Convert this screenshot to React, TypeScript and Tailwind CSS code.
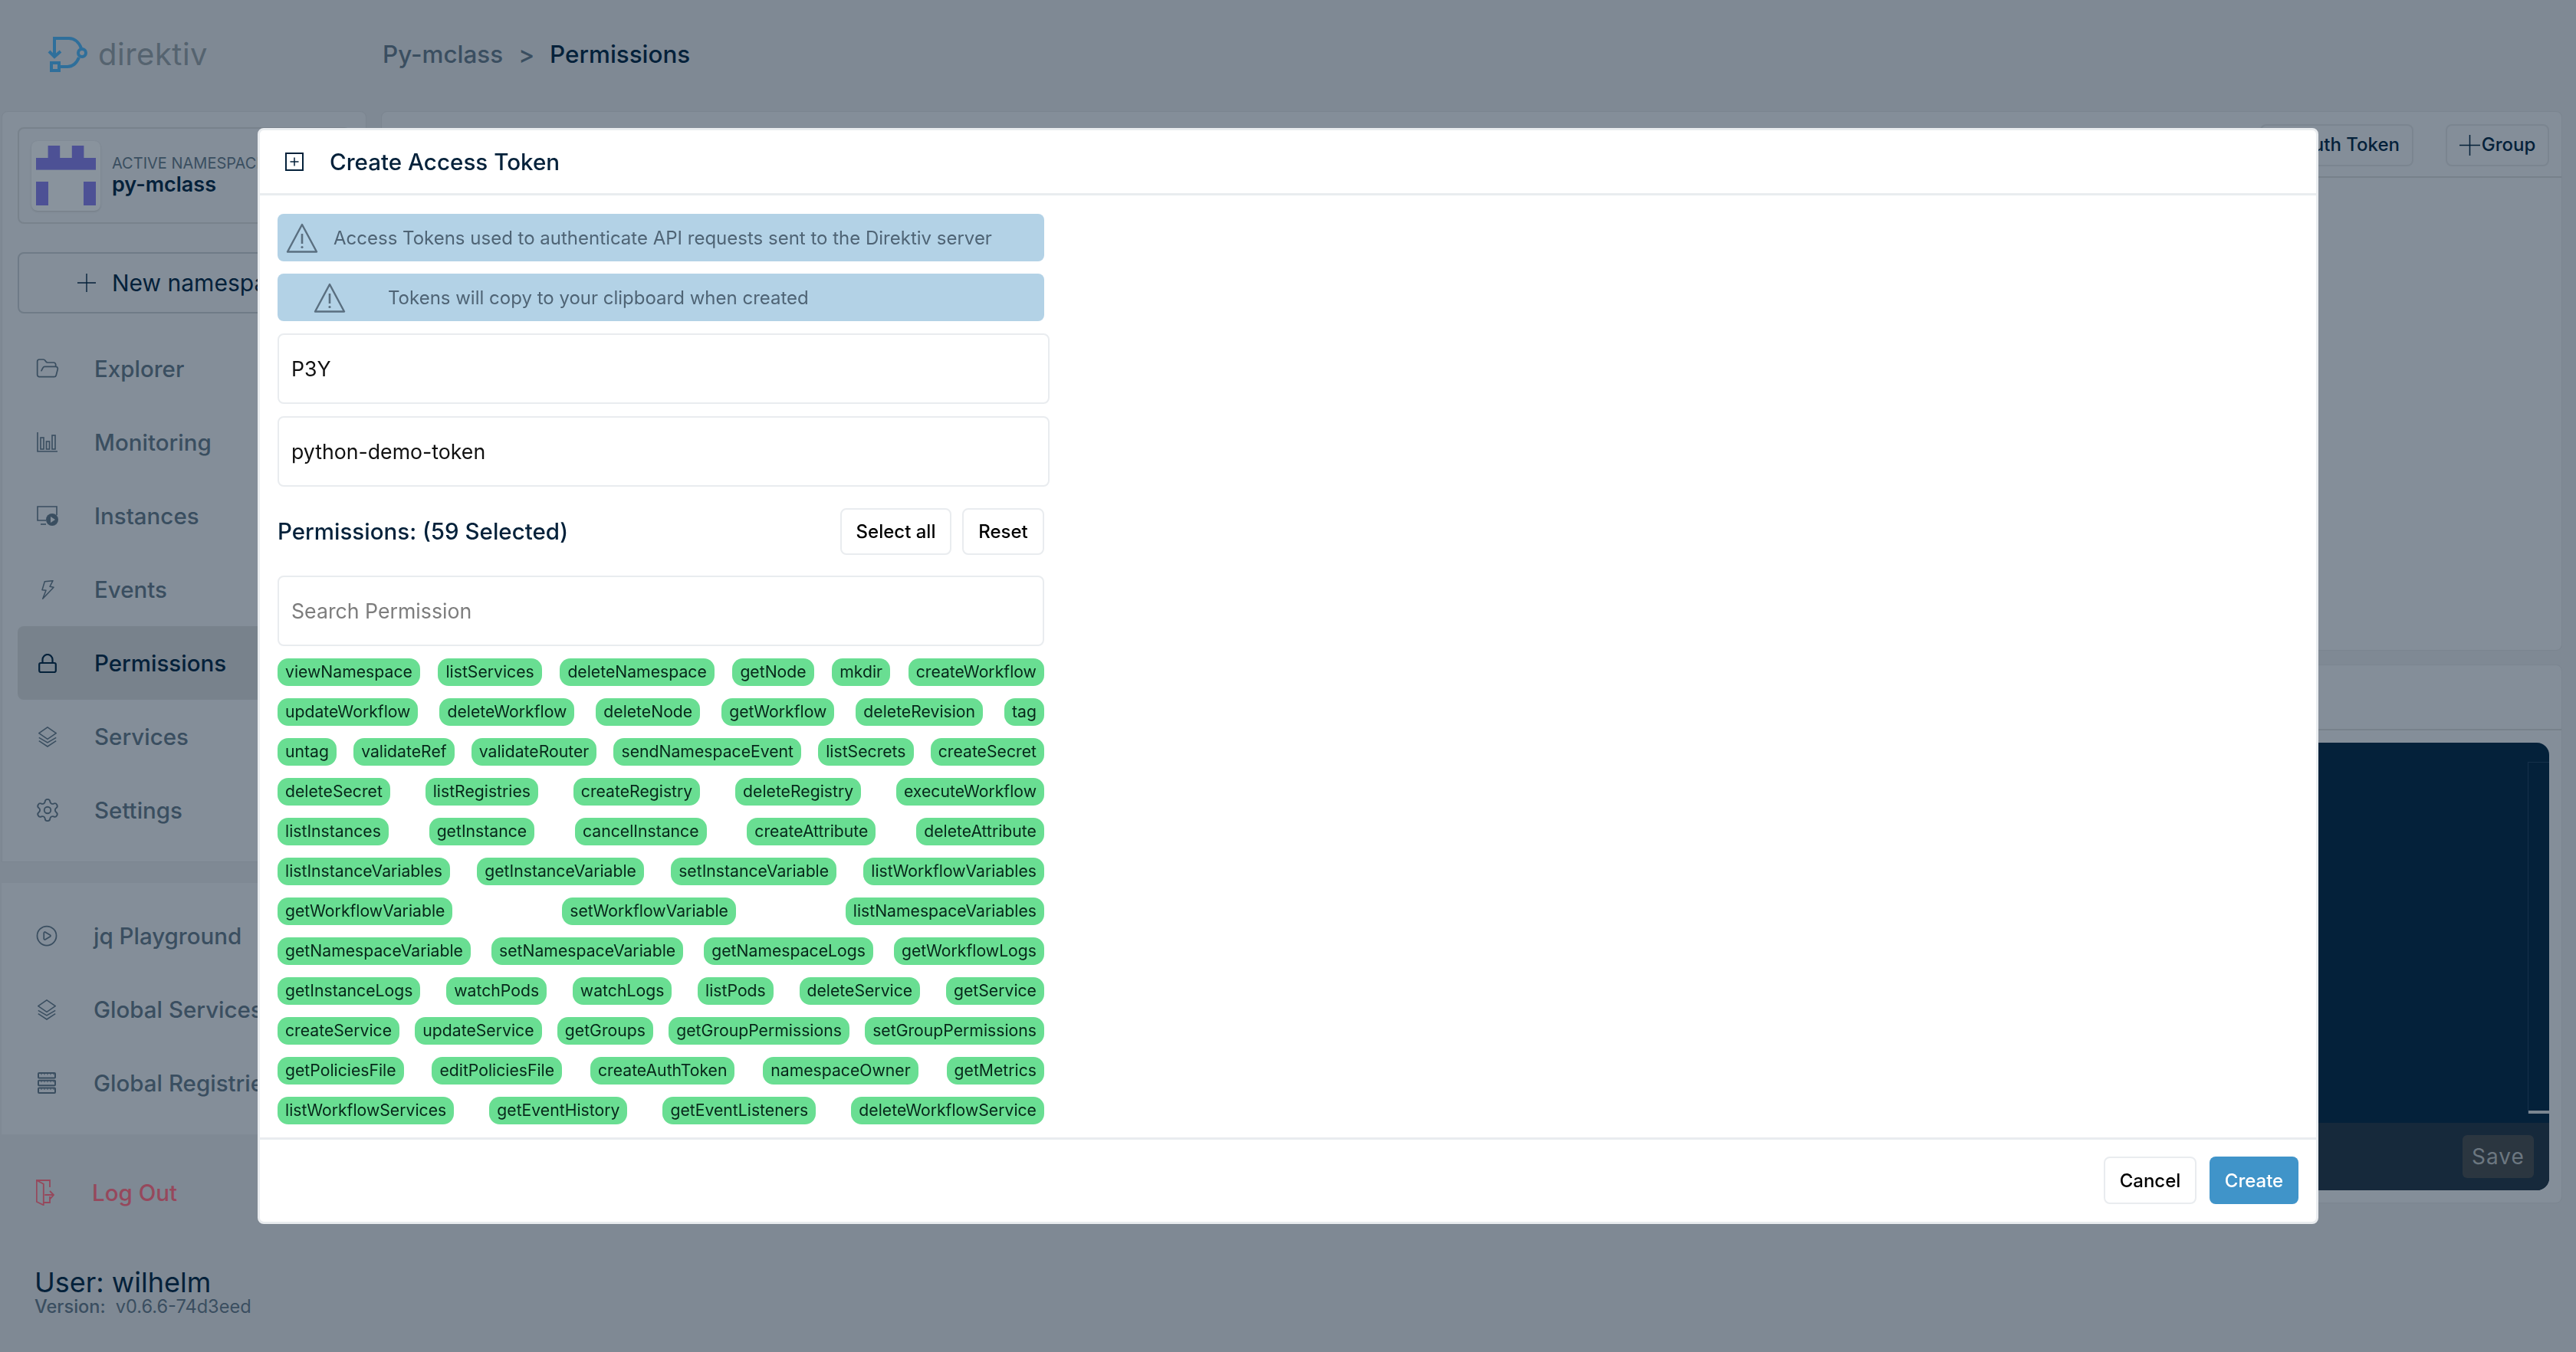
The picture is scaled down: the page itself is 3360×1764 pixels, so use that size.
import React from "react";
import { CirclePlay, FolderOpen, Settings } from "lucide-react";

const PlusThin = ({ size }: { size: number }) => (
  <svg viewBox="0 0 28 28" width={size} height={size} className="shrink-0" fill="none" stroke="currentColor" strokeWidth="1.6">
    <path d="M14 0v28M0 14h28" />
  </svg>
);

const WarningIcon = ({ className }: { className: string }) => (
  <svg viewBox="0 0 42 40" className={`h-[40px] w-[42px] shrink-0 ${className}`} fill="none" stroke="#5a6f80" strokeWidth="2.4">
    <path d="M21 3 40 38.5H2z" strokeLinejoin="round" />
    <path d="M21 15v13" strokeWidth="2.6" />
    <circle cx="21" cy="32.5" r="1.6" fill="#5a6f80" stroke="none" />
  </svg>
);

const MonitoringIcon = () => (
  <svg viewBox="0 0 28 26" className="h-[26px] w-[28px]" fill="none" stroke="currentColor" strokeWidth="1.6">
    <path d="M1 0v25h26" />
    <rect x="5" y="7" width="4" height="15" />
    <rect x="12.5" y="12" width="4" height="10" />
    <rect x="20" y="4" width="4" height="18" />
  </svg>
);

const InstancesIcon = () => (
  <svg viewBox="0 0 28 26" className="h-[26px] w-[28px]" fill="none" stroke="currentColor" strokeWidth="1.6">
    <path d="M12 19H1V1h25v11" />
    <path d="M5 24h7" />
    <circle cx="20" cy="18" r="8" fill="currentColor" stroke="none" />
    <path d="M18 14v8l6-4z" fill="#848e99" stroke="none" />
  </svg>
);

const EventsIcon = () => (
  <svg viewBox="0 0 17 25" className="h-[25px] w-[17px]" fill="none" stroke="currentColor" strokeWidth="1.5" strokeLinejoin="round">
    <path d="M4.3 1.7 15 0.7l-4 7.6 5 1-14.3 15L6 13.3l-5-.6z" />
  </svg>
);

const LockIcon = () => (
  <svg viewBox="0 0 24 25" className="h-[25px] w-[24px]" fill="none" stroke="currentColor" strokeWidth="2.2">
    <rect x="1.2" y="12" width="21.6" height="12" rx="2" />
    <path d="M5.5 12V7.5a6.5 6.5 0 0 1 13 0V12" />
  </svg>
);

const LayersIcon = () => (
  <svg viewBox="0 0 24 27" className="h-[27px] w-[24px]" fill="none" stroke="currentColor" strokeWidth="1.5">
    <path d="M12 .8 23.2 8.7 12 16.4.8 8.7z" />
    <path d="M.8 14.3 12 21l11.2-6.7M.8 18.7 12 26l11.2-7.3" />
  </svg>
);

const RegistriesIcon = () => (
  <svg viewBox="0 0 24 28" className="h-[28px] w-[24px]" fill="none" stroke="currentColor" strokeWidth="2">
    <rect x="1" y="1" width="22" height="6.5" rx="1" />
    <rect x="1" y="10.7" width="22" height="6.5" rx="1" />
    <rect x="1" y="20.4" width="22" height="6.5" rx="1" />
    <path
      d="M5 1v2.5M9 1v2.5M13 1v2.5M17 1v2.5M21 1v2.5M5 10.7v2.5M9 10.7v2.5M13 10.7v2.5M17 10.7v2.5M21 10.7v2.5M5 20.4v2.5M9 20.4v2.5M13 20.4v2.5M17 20.4v2.5M21 20.4v2.5"
      strokeWidth="1"
    />
  </svg>
);

const LogOutIcon = () => (
  <svg viewBox="0 0 24 34" className="h-[34px] w-[24px]" fill="none" stroke="currentColor" strokeWidth="1.8">
    <path d="M18 10V1H.8v28l9 4.3V5.7L.8 1M18 22v8H9.8" />
    <path d="M11.3 20H23M18 15l5 5-5 5.7" />
  </svg>
);

const Logo = () => (
  <svg viewBox="0 0 76 64" className="h-[64px] w-[76px]" fill="none" stroke="#2f6f9b" strokeWidth="4">
    <path d="M21 33V11h19c7 0 13 5 16 13" />
    <path d="M14 28l7 7 8-7" />
    <circle cx="57" cy="30" r="5" />
    <path d="M53 36c-3 7-8 12-15 12H28" />
    <rect x="17" y="43" width="10" height="10" />
  </svg>
);

const NamespaceTile = () => (
  <div className="flex h-[91px] w-[90px] items-center justify-center rounded-lg bg-[#89939d] shadow-sm">
    <svg viewBox="0 0 78 78" className="h-[78px] w-[78px]" fill="#4d5195">
      <rect x="15.6" y="0" width="15.6" height="16" />
      <rect x="46.8" y="0" width="15.6" height="16" />
      <rect x="0" y="16" width="78" height="15.6" />
      <rect x="0" y="47" width="16" height="31" />
      <rect x="62" y="47" width="16" height="31" />
    </svg>
  </div>
);

const mainNav = [
  { label: "Explorer", icon: <FolderOpen size={32} strokeWidth={1.3} /> },
  { label: "Monitoring", icon: <MonitoringIcon /> },
  { label: "Instances", icon: <InstancesIcon /> },
  { label: "Events", icon: <EventsIcon /> },
  { label: "Permissions", icon: <LockIcon />, active: true },
  { label: "Services", icon: <LayersIcon /> },
  { label: "Settings", icon: <Settings size={34} strokeWidth={1.3} /> },
];

const globalNav = [
  { label: "jq Playground", icon: <CirclePlay size={30} strokeWidth={1.4} /> },
  { label: "Global Services", icon: <LayersIcon /> },
  { label: "Global Registries", icon: <RegistriesIcon /> },
];

const permissionRows = [
  ["viewNamespace", "listServices", "deleteNamespace", "getNode", "mkdir", "createWorkflow"],
  ["updateWorkflow", "deleteWorkflow", "deleteNode", "getWorkflow", "deleteRevision", "tag"],
  ["untag", "validateRef", "validateRouter", "sendNamespaceEvent", "listSecrets", "createSecret"],
  ["deleteSecret", "listRegistries", "createRegistry", "deleteRegistry", "executeWorkflow"],
  ["listInstances", "getInstance", "cancelInstance", "createAttribute", "deleteAttribute"],
  ["listInstanceVariables", "getInstanceVariable", "setInstanceVariable", "listWorkflowVariables"],
  ["getWorkflowVariable", "setWorkflowVariable", "listNamespaceVariables"],
  ["getNamespaceVariable", "setNamespaceVariable", "getNamespaceLogs", "getWorkflowLogs"],
  ["getInstanceLogs", "watchPods", "watchLogs", "listPods", "deleteService", "getService"],
  ["createService", "updateService", "getGroups", "getGroupPermissions", "setGroupPermissions"],
  ["getPoliciesFile", "editPoliciesFile", "createAuthToken", "namespaceOwner", "getMetrics"],
  ["listWorkflowServices", "getEventHistory", "getEventListeners", "deleteWorkflowService"],
];

const NavRow = ({ label, icon, active }: { label: string; icon: React.ReactNode; active?: boolean }) => (
  <div
    className={`flex h-[96px] items-center rounded-lg pl-[22px] text-[29.5px] font-medium ${
      active ? "bg-[#78828c] text-[#04213a]" : "text-[#3a4e60]"
    }`}
  >
    <span className="flex w-[34px] justify-center">{icon}</span>
    <span className="ml-[44px] whitespace-nowrap">{label}</span>
  </div>
);

const Alert = ({ text, iconMargin, gap }: { text: string; iconMargin: string; gap: string }) => (
  <div className="flex h-[62px] w-[1000px] items-center rounded-lg bg-[#b3d2e6] text-[24px] text-[#4f6475]">
    <WarningIcon className={iconMargin} />
    <span className={`${gap} pt-[2px]`}>{text}</span>
  </div>
);

const Field = ({ value }: { value: string }) => (
  <div className="flex h-[92px] w-[1007px] items-center rounded-lg border-[2px] border-[#e9ecef] bg-white pl-[16px] text-[26.7px] text-[#111]">
    {value}
  </div>
);

const Sidebar = () => (
  <aside className="ml-[2px] flex w-[476px] shrink-0 flex-col">
    <div className="flex h-[980px] flex-col rounded-t-lg border border-[#7b8590] bg-[#848e99] px-[20px] pt-[20px]">
      <div className="flex h-[126px] items-center rounded-lg border-[2px] border-[#78828c] pl-[16px]">
        <NamespaceTile />
        <div className="ml-[15px] -mt-[3px] flex flex-col whitespace-nowrap">
          <span className="text-[20px] leading-[26px] text-[#3a4e60]">ACTIVE NAMESPACE</span>
          <span className="text-[27px] font-semibold leading-[29px] text-[#04213a]">py-mclass</span>
        </div>
      </div>
      <div className="mt-[37px] flex h-[80px] items-center rounded-lg border-[2px] border-[#6f7b87] pl-[76px] text-[#04213a]">
        <PlusThin size={24} />
        <span className="ml-[21px] whitespace-nowrap text-[30px] font-normal">New namespace</span>
      </div>
      <nav className="mt-[24px] flex flex-col">
        {mainNav.map((item) => (
          <NavRow key={item.label} {...item} />
        ))}
      </nav>
    </div>
    <div className="mt-[27px] flex h-[328px] flex-col bg-[#848e99] px-[20px] pt-[21px]">
      {globalNav.map((item) => (
        <NavRow key={item.label} {...item} />
      ))}
    </div>
    <div className="mt-[28px] flex h-[96px] items-center pl-[45px] text-[29.5px] font-medium text-[#96485c]">
      <LogOutIcon />
      <span className="ml-[49px]">Log Out</span>
    </div>
    <div className="mt-[49px] pl-[43px]">
      <div className="text-[36px] leading-[40px] text-[#04213a]">User: wilhelm</div>
      <div className="flex whitespace-nowrap text-[23.6px] leading-[24px] text-[#3a4e60]">
        <span className="font-medium">Version:</span>
        <span className="ml-[13px] font-normal">v0.6.6-74d3eed</span>
      </div>
    </div>
  </aside>
);

const MainPanels = () => (
  <main className="ml-[19px] flex w-[2845px] flex-col gap-[18px]">
    <section className="flex h-[704px] flex-col rounded-lg border border-[#7b8590] bg-[#848e99]">
      <div className="flex h-[86px] items-center justify-end gap-[42px] border-b-[2px] border-[#77818b] pr-[16px] pt-[2px] text-[24px] font-medium text-[#04213a]">
        <div className="flex h-[55px] w-[200px] items-center justify-end rounded-lg border-[2px] border-[#7b8590] pr-[16px]">
          Auth Token
        </div>
        <div className="flex h-[55px] w-[135px] items-center justify-center gap-[2px] rounded-lg border-[2px] border-[#7b8590]">
          <PlusThin size={27} />
          Group
        </div>
      </div>
    </section>
    <section className="flex h-[703px] flex-col rounded-lg border border-[#7b8590] bg-[#848e99]">
      <div className="h-[85px] border-b-[2px] border-[#77818b]" />
      <div className="mx-[16px] mt-[16px] flex h-[584px] flex-col overflow-hidden rounded-[16px] bg-[#04213a]">
        <div className="flex flex-1 justify-end pt-[25px]">
          <div className="mb-[12px] flex w-[28px] flex-col justify-end border-l border-t border-[#15304a]">
            <div className="h-[4px] bg-[#7a8590]" />
          </div>
        </div>
        <div className="flex h-[88px] items-center justify-end bg-[#16293b] pr-[20px]">
          <div className="flex h-[56px] w-[93px] items-center justify-center rounded-md bg-[#2b3640] text-[28px] tracking-[1px] text-[#6c7780]">
            Save
          </div>
        </div>
      </div>
    </section>
  </main>
);

const TokenModal = () => (
  <div className="fixed inset-0 flex items-center justify-center">
    <div className="flex h-[1430px] w-[2688px] flex-col rounded-lg border-[3px] border-[#e9ecef] bg-white">
      <div className="flex h-[85px] shrink-0 items-center border-b-[3px] border-[#e9ecef] pl-[33px] text-[#04213a]">
        <svg viewBox="0 0 24 24" className="h-[24px] w-[24px]" fill="none" stroke="currentColor" strokeWidth="2">
          <rect x="1" y="1" width="22" height="22" />
          <path d="M12 6.5v11M6.5 12h11" strokeWidth="1.5" />
        </svg>
        <span className="ml-[34px] text-[29.6px] font-medium">Create Access Token</span>
      </div>
      <div className="flex flex-1 flex-col pl-[23px] pt-[24px]">
        <div className="flex flex-col gap-[16px]">
          <Alert
            text="Access Tokens used to authenticate API requests sent to the Direktiv server"
            iconMargin="ml-[11px]"
            gap="ml-[20px]"
          />
          <Alert text="Tokens will copy to your clipboard when created" iconMargin="ml-[47px]" gap="ml-[55px]" />
        </div>
        <div className="mt-[16px] flex flex-col gap-[16px]">
          <Field value="P3Y" />
          <Field value="python-demo-token" />
        </div>
        <div className="mt-[28px] flex h-[61px] w-[1000px] items-center justify-between">
          <span className="text-[29.5px] font-medium text-[#04213a]">Permissions: (59 Selected)</span>
          <div className="flex gap-[14px] text-[24px] font-medium text-black">
            <div className="flex h-[61px] w-[145px] items-center justify-center rounded-lg border-[2px] border-[#e9ecef]">
              Select all
            </div>
            <div className="flex h-[61px] w-[107px] items-center justify-center rounded-lg border-[2px] border-[#e9ecef]">
              Reset
            </div>
          </div>
        </div>
        <div className="mt-[27px] flex h-[92px] w-[1000px] items-center rounded-lg border-[2px] border-[#e9ecef] pl-[16px] text-[26.7px] text-[#7d7d7d]">
          Search Permission
        </div>
        <div className="mt-[16px] flex w-[1000px] flex-col gap-[16px]">
          {permissionRows.map((row) => (
            <div key={row[0]} className="flex justify-between">
              {row.map((name) => (
                <span
                  key={name}
                  className="flex h-[36px] items-center whitespace-nowrap rounded-[14px] bg-[#69de92] px-[10px] text-[21.2px] text-[#07271a]"
                >
                  {name}
                </span>
              ))}
            </div>
          ))}
        </div>
      </div>
      <div className="flex h-[110px] shrink-0 items-start justify-end gap-[17px] border-t-[3px] border-[#e9ecef] pr-[23px] pt-[22px] text-[24px] font-medium">
        <div className="flex h-[62px] w-[121px] items-center justify-center rounded-lg border-[2px] border-[#e9ecef] pt-[1px] text-black">
          Cancel
        </div>
        <div className="flex h-[62px] w-[116px] items-center justify-center rounded-lg bg-[#4094c9] pt-[1px] text-white">
          Create
        </div>
      </div>
    </div>
  </div>
);

const App = () => {
  return (
    <div className="relative h-[1764px] w-[3360px] overflow-hidden bg-[#7f8994] font-['Inter',sans-serif]">
      <header className="flex h-[145px] items-center pb-[3px]">
        <div className="ml-[50px] flex items-center">
          <Logo />
          <span className="ml-[2px] text-[40px] font-normal tracking-[0.5px] text-[#55636f]">direktiv</span>
        </div>
        <div className="ml-[228px] mt-[2px] flex items-center gap-[20px] text-[31.4px] font-medium">
          <span className="text-[#3a4e60]">Py-mclass</span>
          <span className="text-[#3a4e60]">&gt;</span>
          <span className="text-[#04213a]">Permissions</span>
        </div>
      </header>
      <div className="flex">
        <Sidebar />
        <MainPanels />
      </div>
      <TokenModal />
    </div>
  );
};

export default App;
